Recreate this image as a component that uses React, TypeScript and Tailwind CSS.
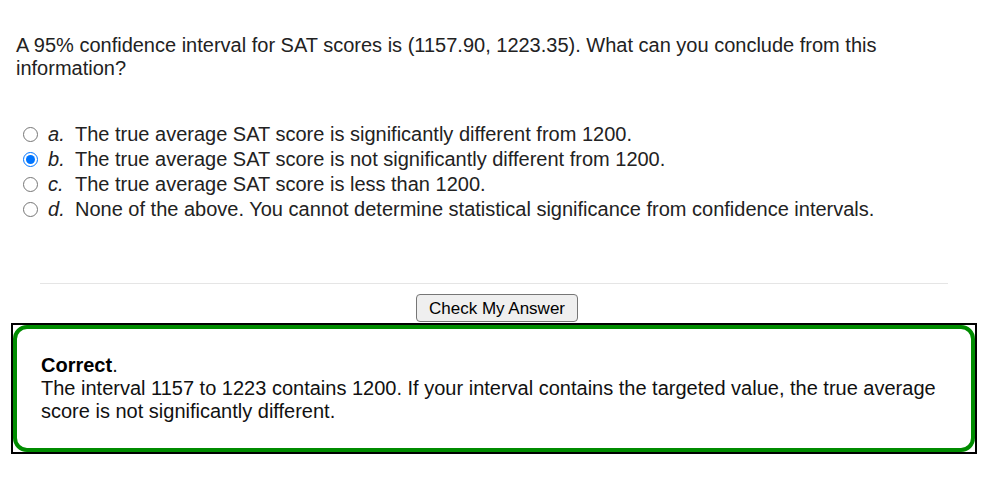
import { useState } from "react";

const options = [
  { key: "a", text: "The true average SAT score is significantly different from 1200." },
  { key: "b", text: "The true average SAT score is not significantly different from 1200." },
  { key: "c", text: "The true average SAT score is less than 1200." },
  { key: "d", text: "None of the above. You cannot determine statistical significance from confidence intervals." },
];

export default function App() {
  const [selected, setSelected] = useState("b");

  return (
    <div className="w-[991px] h-[480px] bg-white text-[20px] leading-[23px] text-[#222] font-['Liberation_Sans',Arial,sans-serif]">
      <div className="pt-[34px] pl-[16px] pr-[100px]">
        A 95% confidence interval for SAT scores is (1157.90, 1223.35). What can you conclude from this information?
      </div>

      <ul className="mt-[42px] flex flex-col">
        {options.map((opt) => (
          <li key={opt.key} className="flex items-center h-[25px]">
            <input
              type="radio"
              name="q"
              checked={selected === opt.key}
              onChange={() => setSelected(opt.key)}
              className="ml-[23px] w-[15px] h-[15px] m-0 accent-[#0075ff]"
            />
            <span className="ml-[10px] w-[27px] italic">{opt.key}.</span>
            <span>{opt.text}</span>
          </li>
        ))}
      </ul>

      <hr className="mt-[61px] ml-[40px] mr-[43px] border-0 border-t border-[#e5e5e5]" />

      <div className="flex justify-center mt-[10px] pl-[3px]">
        <button className="h-[28px] px-[12px] text-[17px] text-black bg-[#efefef] border border-[#767676] rounded-[4px]">
          Check My Answer
        </button>
      </div>

      <div className="ml-[11px] mr-[14px] mt-[1px] border-2 border-black">
        <div className="border-[4px] border-[#008c00] rounded-[14px] pl-[24px] pr-[24px] pt-[25px] pb-[25px] text-[#111]">
          <div>
            <span className="font-bold text-black">Correct</span>.
          </div>
          <div>
            The interval 1157 to 1223 contains 1200. If your interval contains the targeted value, the true average score is not significantly different.
          </div>
        </div>
      </div>
    </div>
  );
}
